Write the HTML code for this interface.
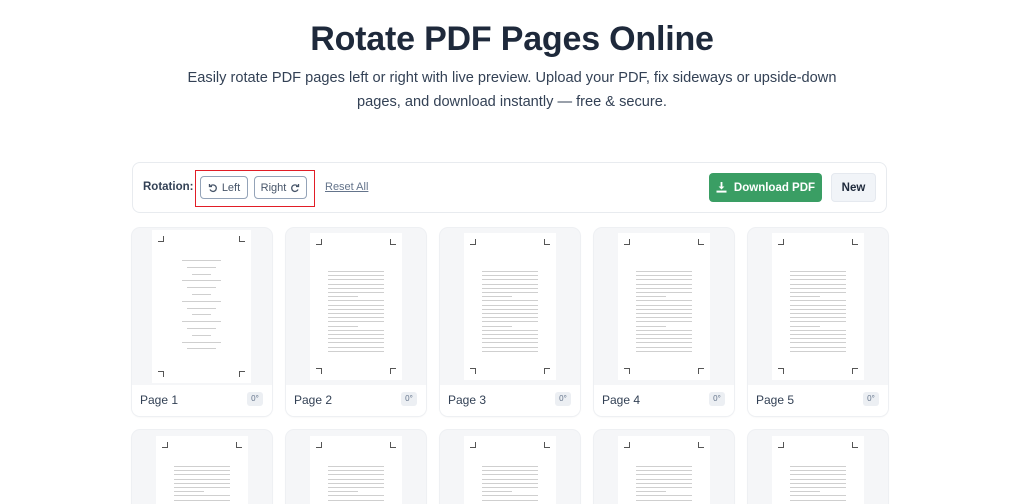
<!DOCTYPE html>
<html><head><meta charset="utf-8">
<style>
*{box-sizing:border-box;margin:0;padding:0}
html,body{width:1024px;height:504px;overflow:hidden}
body{background:#fff;font-family:"Liberation Sans",Arial,sans-serif;color:#1e293b;position:relative}
h1{position:absolute;top:20px;left:0;width:1024px;text-align:center;font-size:34px;font-weight:700;color:#1e293b;letter-spacing:-0.2px}
.sub{position:absolute;top:66px;left:180px;width:664px;text-align:center;font-size:14.6px;line-height:24px;color:#334155}
.bar{position:absolute;left:132px;top:162px;width:755px;height:51px;border:1px solid #e8ebef;border-radius:8px}
.lbl{position:absolute;left:143px;top:181px;font-size:11.5px;font-weight:700;color:#334155}
.btn{position:absolute;top:176px;height:23px;border:1px solid #94a3b8;border-radius:4px;font-size:11px;color:#475569;display:flex;align-items:center;justify-content:center;gap:4px;background:#fff}
.red{position:absolute;left:195px;top:170px;width:120px;height:37px;border:1.5px solid #e11d26}
.reset{position:absolute;left:325px;top:181px;font-size:11px;color:#64748b;text-decoration:underline}
.dl{position:absolute;left:709px;top:173px;width:113px;height:29px;background:#3a9e64;border-radius:4px;color:#fff;font-size:11.5px;font-weight:700;display:flex;align-items:center;justify-content:center;gap:7px}
.new{position:absolute;left:831px;top:173px;width:45px;height:29px;background:#f1f4f8;border:1px solid #e5e9ef;border-radius:4px;font-size:11.5px;font-weight:700;color:#1e293b;display:flex;align-items:center;justify-content:center}
.card{position:absolute;width:140px;height:188px;border-radius:8px;background:#f5f6f8;box-shadow:0 0 0 1px #eef0f3,0 1px 2px rgba(0,0,0,.06);overflow:hidden}
.foot{position:absolute;left:0;top:157px;width:140px;height:31px;background:#fff;}
.foot span{position:absolute;left:8px;top:8px;font-size:12px;color:#334155}
.foot b{position:absolute;right:9px;top:7px;width:16px;height:14px;background:#eceff3;border-radius:3px;font-size:8px;font-weight:400;color:#64748b;text-align:center;line-height:14px}
.pg{position:absolute;background:#fff;overflow:hidden}
.c{position:absolute;width:6px;height:6px;border-color:#555;border-style:solid;border-width:0}
.ln{position:absolute;height:1px;background:#cfcfcf}
</style></head><body>
<h1>Rotate PDF Pages Online</h1>
<div class="sub">Easily rotate PDF pages left or right with live preview. Upload your PDF, fix sideways or upside-down pages, and download instantly — free &amp; secure.</div>
<div class="bar"></div>
<div class="lbl">Rotation:</div>
<div class="red"></div>
<div class="btn" style="left:200px;width:48px"><svg width="10" height="10" viewBox="0 0 10 10" fill="none" stroke="#475569" stroke-width="1.3"><path d="M2.5 3A3.3 3.3 0 1 1 2 6.5"/><path d="M1.5 1v2.5H4"/></svg>Left</div>
<div class="btn" style="left:254px;width:53px">Right<svg width="10" height="10" viewBox="0 0 10 10" fill="none" stroke="#475569" stroke-width="1.3"><path d="M7.5 3A3.3 3.3 0 1 0 8 6.5"/><path d="M8.5 1v2.5H6"/></svg></div>
<div class="reset">Reset All</div>
<div class="dl"><svg width="11" height="11" viewBox="0 0 11 11" fill="#fff"><path d="M4.6 0h1.8v4.5h2L5.5 7.5 2.6 4.5h2z"/><rect x="0.5" y="8.6" width="10" height="2"/></svg>Download PDF</div>
<div class="new">New</div>
<div id="g"></div>
<script>
var xs=[132,286,440,594,748],h='';
function page(x,y,w,ht,lines,start,bottom){
 var s='<div class="pg" style="left:'+x+'px;top:'+y+'px;width:'+w+'px;height:'+ht+'px">';
 s+='<div class="c" style="left:6px;top:6px;border-right-width:1.5px;border-bottom-width:1.5px"></div>';
 s+='<div class="c" style="right:6px;top:6px;border-left-width:1.5px;border-bottom-width:1.5px"></div>';
 if(bottom){
 s+='<div class="c" style="left:6px;bottom:6px;border-right-width:1.5px;border-top-width:1.5px"></div>';
 s+='<div class="c" style="right:6px;bottom:6px;border-left-width:1.5px;border-top-width:1.5px"></div>';}
 for(var i=0;i<lines;i++){var yy=start+i*4.2;if(bottom&&yy>ht-26)break;var wl=(i%7==6)?30:w-36;s+='<div class="ln" style="left:18px;top:'+yy+'px;width:'+wl+'px"></div>';}
 return s+'</div>';
}
for(var i=0;i<5;i++){
 var x=xs[i];
 h+='<div class="card" style="left:'+x+'px;top:228px"><div class="foot"><span>Page '+(i+1)+'</span><b>0°</b></div></div>';
 if(i==0){h+=page(x+20,230,99,153,0,0,1);
  var s='';for(var k=0;k<14;k++){s+='<div class="ln" style="left:'+(x+20+30+(k%3)*5)+'px;top:'+(260+k*6.8)+'px;width:'+(39-(k%3)*10)+'px"></div>';}h+=s;}
 else h+=page(x+24,233,92,147,30,38,1);
 h+='<div class="card" style="left:'+x+'px;top:430px;height:74px;border-bottom-left-radius:0;border-bottom-right-radius:0"></div>';
 h+=page(x+24,436,92,68,12,30,0);
}
document.getElementById('g').innerHTML=h;
</script>
</body></html>
